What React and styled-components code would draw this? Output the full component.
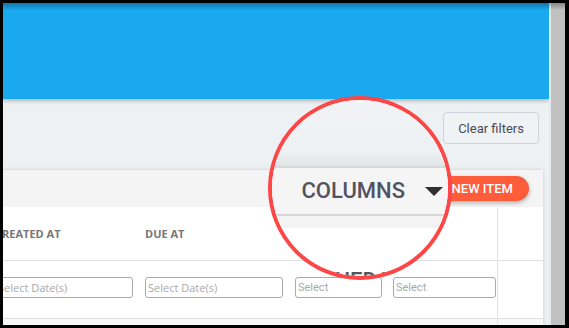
import React from 'react';
import styled, { createGlobalStyle } from 'styled-components';

const GlobalStyle = createGlobalStyle`
  html, body { margin: 0; padding: 0; background: #000; }
  body { font-family: Roboto, "Liberation Sans", sans-serif; }
  * { box-sizing: border-box; }
`;

const Frame = styled.div`
  position: relative;
  width: 569px;
  height: 328px;
  padding: 3px 4px 3px 3px;
  background: #000;
  display: flex;
  overflow: hidden;
`;

const Viewport = styled.div`
  position: relative;
  flex: 1;
  display: flex;
  overflow: hidden;
  &::after {
    content: '';
    position: absolute;
    left: 0;
    right: 0;
    top: 0;
    height: 7px;
    background: linear-gradient(rgba(0, 0, 0, 0.3), rgba(0, 0, 0, 0));
    pointer-events: none;
    z-index: 3;
  }
`;

const Page = styled.div`
  width: 546px;
  flex: none;
  display: flex;
  flex-direction: column;
  background: #eef1f4;
  overflow: hidden;
`;

const Scrollbar = styled.div`
  flex: 1;
  border-left: 2px solid #e6e9ec;
  background: #c1c1c1;
`;

const AppBar = styled.header`
  flex: none;
  height: 96px;
  background: #1aa8ef;
  box-shadow: 0 2px 4px rgba(0, 0, 0, 0.25);
  position: relative;
  z-index: 1;
`;

const Actions = styled.div`
  flex: none;
  height: 71px;
  display: flex;
  justify-content: flex-end;
  align-items: flex-start;
  padding: 13px 10px 0 0;
`;

const ClearButton = styled.button`
  height: 32px;
  padding: 0 14px;
  border: 1px solid #cfd4d9;
  border-radius: 4px;
  background: #f0f3f5;
  color: #4a4a55;
  font: 400 13px Roboto, "Liberation Sans", sans-serif;
`;

const Card = styled.section`
  flex: 1;
  margin: 0 6px 0 -13px;
  background: #fff;
  box-shadow: 0 0 4px rgba(0, 0, 0, 0.16);
  display: flex;
  flex-direction: column;
`;

const Toolbar = styled.div`
  flex: none;
  height: 37px;
  background: #f4f4f4;
  display: flex;
  justify-content: flex-end;
  align-items: center;
  padding-right: 14px;
`;

const NewItem = styled.button`
  height: 25px;
  padding: 0 16px;
  border: none;
  border-radius: 13px;
  background: #ff5c3b;
  color: #fff;
  font: 500 13px Roboto, "Liberation Sans", sans-serif;
  box-shadow: 0 2px 4px rgba(0, 0, 0, 0.28);
`;

const Row = styled.div`
  flex: ${(p) => (p.$fill ? 1 : 'none')};
  height: ${(p) => (p.$h ? `${p.$h}px` : 'auto')};
  display: grid;
  grid-template-columns: 150px 150px 98px 110px 45px;
  border-bottom: ${(p) => (p.$fill ? 'none' : '1px solid #e2e2e2')};
  background: ${(p) => (p.$fill ? '#f8f8f8' : '#fff')};
`;

const Cell = styled.div`
  display: flex;
  align-items: ${(p) => (p.$top ? 'flex-start' : 'center')};
  padding: ${(p) => (p.$top ? '16px 0 0 5px' : '0 0 0 5px')};
  border-right: ${(p) => (p.$divider ? '1px solid #e2e2e2' : 'none')};
`;

const Label = styled.span`
  font: 700 11px "Open Sans", "Liberation Sans", sans-serif;
  color: #767676;
  white-space: nowrap;
`;

const Field = styled.input`
  width: ${(p) => p.$w}px;
  height: 21px;
  border: 1px solid #aaa;
  border-radius: 3px;
  padding: 0 2px;
  background: #fff;
  font: 400 11px ${(p) => (p.$open ? '"Open Sans"' : 'Roboto')}, "Liberation Sans", sans-serif;
  color: #555;
  &::placeholder { color: #a9a9a9; }
`;

const Lens = styled.div`
  position: absolute;
  left: 268px;
  top: 96px;
  width: 184px;
  height: 184px;
  border: 4px solid #fd4646;
  border-radius: 50%;
  overflow: hidden;
  background: #fff;
  display: flex;
  flex-direction: column;
  z-index: 5;
`;

const LensTop = styled.div`
  flex: none;
  height: 66px;
  background: linear-gradient(#f1f3f6 0%, #eef1f4 80%, #e2e5e8 100%);
`;

const LensLine = styled.div`
  flex: none;
  height: 2px;
  background: #d8d8d8;
`;

const LensBand = styled.div`
  flex: none;
  height: 46px;
  background: #f5f5f5;
  display: flex;
  align-items: center;
  justify-content: flex-end;
  gap: 20px;
  padding-right: 5px;
`;

const ColumnsText = styled.span`
  font: 500 22px Roboto, "Liberation Sans", sans-serif;
  color: #525262;
  line-height: 1;
`;

const Caret = styled.span`
  width: 0;
  height: 0;
  border-left: 9px solid transparent;
  border-right: 9px solid transparent;
  border-top: 9px solid #2f2f2f;
  margin-top: 1px;
`;

const LensStrip = styled.div`
  flex: none;
  height: 12px;
  background: #f3f3f3;
`;

const LensBody = styled.div`
  flex: 1;
  padding: 42px 78px 0 0;
  text-align: right;
  font: 500 22px Roboto, "Liberation Sans", sans-serif;
  line-height: 22px;
  color: #555;
  white-space: nowrap;
`;

export default function App() {
  return (
    <>
      <GlobalStyle />
      <Frame>
        <Viewport>
          <Page>
            <AppBar />
            <Actions>
              <ClearButton>Clear filters</ClearButton>
            </Actions>
            <Card>
              <Toolbar>
                <NewItem>NEW ITEM</NewItem>
              </Toolbar>
              <Row $h={54}>
                <Cell><Label>CREATED AT</Label></Cell>
                <Cell><Label>DUE AT</Label></Cell>
                <Cell><Label>ASSIGNED TO</Label></Cell>
                <Cell $divider />
                <Cell />
              </Row>
              <Row $h={58}>
                <Cell $top><Field $w={138} $open readOnly placeholder="Select Date(s)" /></Cell>
                <Cell $top><Field $w={138} $open readOnly placeholder="Select Date(s)" /></Cell>
                <Cell $top><Field $w={87} readOnly placeholder="Select" /></Cell>
                <Cell $top $divider><Field $w={103} readOnly placeholder="Select" /></Cell>
                <Cell $top />
              </Row>
              <Row $fill>
                <Cell />
                <Cell />
                <Cell />
                <Cell $divider />
                <Cell />
              </Row>
            </Card>
          </Page>
          <Scrollbar />
        </Viewport>
        <Lens>
          <LensTop />
          <LensLine />
          <LensBand>
            <ColumnsText>COLUMNS</ColumnsText>
            <Caret />
          </LensBand>
          <LensLine />
          <LensStrip />
          <LensBody>ASSIGNED TO</LensBody>
        </Lens>
      </Frame>
    </>
  );
}
